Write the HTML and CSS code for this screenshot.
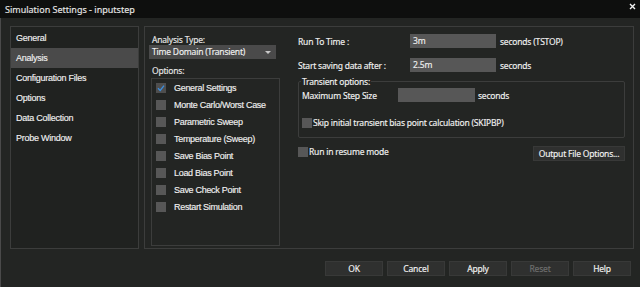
FILE: index.html
```html
<!DOCTYPE html>
<html lang="en">
<head>
  <meta charset="UTF-8" />
  <title>Simulation Settings - inputstep</title>
  <link rel="stylesheet" href="styles.css">
</head>
<body>

  <div class="titlebar">
    <span class="title">Simulation Settings - inputstep</span>
    <svg class="close" width="7" height="7" viewBox="0 0 7 7">
      <path d="M1 1 L6 6 M6 1 L1 6" stroke="#f2f2f2" stroke-width="1.4"/>
    </svg>
  </div>

  <div class="main">
    <ul class="nav">
      <li>General</li>
      <li class="active">Analysis</li>
      <li>Configuration Files</li>
      <li>Options</li>
      <li>Data Collection</li>
      <li>Probe Window</li>
    </ul>

    <div class="panel">
      <div class="leftcol">
        <div class="lbl">Analysis Type:</div>
        <div class="dropdown">
          <span>Time Domain (Transient)</span>
          <span class="arrow"></span>
        </div>
        <div class="lbl opts">Options:</div>
        <div class="optbox">
          <div class="opt"><span class="box checked"><svg width="10" height="10" viewBox="0 0 10 10"><path d="M2 5.2 L4.2 7.4 L8 2.6" fill="none" stroke="#3b8fe0" stroke-width="1.3"/></svg></span>General Settings</div>
          <div class="opt"><span class="box"></span>Monte Carlo/Worst Case</div>
          <div class="opt"><span class="box"></span>Parametric Sweep</div>
          <div class="opt"><span class="box"></span>Temperature (Sweep)</div>
          <div class="opt"><span class="box"></span>Save Bias Point</div>
          <div class="opt"><span class="box"></span>Load Bias Point</div>
          <div class="opt"><span class="box"></span>Save Check Point</div>
          <div class="opt"><span class="box"></span>Restart Simulation</div>
        </div>
      </div>

      <div class="rightcol">
        <div class="field">
          <span class="flabel">Run To Time :</span>
          <span class="input">3m</span>
          <span class="unit">seconds (TSTOP)</span>
        </div>
        <div class="field">
          <span class="flabel">Start saving data after :</span>
          <span class="input">2.5m</span>
          <span class="unit">seconds</span>
        </div>

        <div class="group">
          <span class="legend">Transient options:</span>
          <div class="field small">
            <span class="flabel">Maximum Step Size</span>
            <span class="input"></span>
            <span class="unit">seconds</span>
          </div>
          <div class="check"><span class="box"></span>Skip initial transient bias point calculation (SKIPBP)</div>
        </div>

        <div class="resume">
          <div class="check"><span class="box"></span>Run in resume mode</div>
          <button class="btn outfile">Output File Options...</button>
        </div>
      </div>
    </div>
  </div>

  <div class="buttons">
    <button class="btn">OK</button>
    <button class="btn">Cancel</button>
    <button class="btn">Apply</button>
    <button class="btn disabled">Reset</button>
    <button class="btn">Help</button>
  </div>

</body>
</html>
```

FILE: styles.css
```css
body {
  margin: 0;
  width: 640px;
  height: 287px;
  overflow: hidden;
  background: #232523;
  color: #f0f0f0;
  font-family: "Noto Sans", sans-serif;
  font-size: 8.5px;
  letter-spacing: -0.2px;
  -webkit-text-stroke: 0.15px;
  box-shadow: inset 1px 0 0 #4a4a4a;
}

.titlebar {
  height: 18px;
  background: #0e0f0e;
  display: flex;
  align-items: center;
  justify-content: space-between;
  padding: 0 4px 0 5px;
}

.title {
  color: #e6e6e6;
  font-size: 9px;
  letter-spacing: 0;
}

.close {
  margin-top: -6px;
}

.main {
  display: flex;
  gap: 5px;
  padding: 8px 6px 0 10px;
  height: 223px;
}

.nav {
  list-style: none;
  margin: 0;
  padding: 1px 0 0;
  width: 127px;
  border: 1px solid #3c3d3c;
  background: #202220;
  font-family: "Liberation Sans", sans-serif;
  font-size: 9px;
  letter-spacing: -0.25px;
}

.nav li {
  height: 20px;
  line-height: 20px;
  padding-left: 5px;
  color: #f0f0f0;
}

.nav li.active {
  background: #4a4a4a;
}

.panel {
  flex: 1;
  display: flex;
  gap: 18px;
  border: 1px solid #3c3d3c;
  padding: 7px 8px 0 4px;
}

.leftcol {
  width: 131px;
  display: flex;
  flex-direction: column;
}

.lbl {
  padding-left: 3px;
  height: 11px;
  line-height: 11px;
  color: #e6e6e6;
}

.opts {
  margin-top: 6px;
}

.dropdown {
  width: 127px;
  height: 14px;
  background: #4a4a4a;
  display: flex;
  align-items: center;
  justify-content: space-between;
  padding: 0 5px 0 3px;
  box-sizing: border-box;
  line-height: 14px;
}

.arrow {
  border-left: 3px solid transparent;
  border-right: 3px solid transparent;
  border-top: 3px solid #c8c8c8;
}

.optbox {
  margin: 2px 0 0 2px;
  height: 168px;
  border: 1px solid #3c3d3c;
  box-sizing: border-box;
}

.opt {
  display: flex;
  align-items: center;
  height: 17px;
  padding-left: 4px;
  font-family: "Liberation Sans", sans-serif;
  font-size: 9px;
  letter-spacing: -0.3px;
  color: #f0f0f0;
}

.box {
  width: 10px;
  height: 10px;
  background: #575757;
  display: inline-block;
  flex: none;
}

.opt .box {
  margin-right: 8px;
}

.box.checked {
  background: #4e4e4e;
}

.box svg {
  display: block;
}

.rightcol {
  flex: 1;
  display: flex;
  flex-direction: column;
}

.field {
  display: flex;
  align-items: center;
  height: 14px;
}

.field + .field {
  margin-top: 10px;
}

.flabel {
  width: 112px;
}

.input {
  width: 86px;
  height: 14px;
  line-height: 14px;
  background: #575757;
  padding-left: 3px;
  box-sizing: border-box;
  margin-right: 4px;
}

.group {
  position: relative;
  margin-top: 9px;
  height: 57px;
  border: 1px solid #3c3d3c;
  border-radius: 2px;
  padding: 6px 3px 0;
  box-sizing: border-box;
}

.legend {
  position: absolute;
  top: -6px;
  left: 2px;
  padding: 0 1px;
  background: #232523;
  line-height: 11px;
}

.group .flabel {
  width: 96px;
}

.group .input {
  width: 77px;
  margin-right: 3px;
}

.check {
  display: flex;
  align-items: center;
  gap: 1px;
}

.group .check {
  margin-top: 15px;
}

.resume {
  display: flex;
  justify-content: space-between;
  align-items: flex-start;
  margin-top: 8px;
}

.btn {
  font-family: "Noto Sans", sans-serif;
  font-size: 8.5px;
  letter-spacing: -0.2px;
  -webkit-text-stroke: 0.15px;
  color: #f2f2f2;
  background: #2f302f;
  border: 1px solid #383938;
  height: 15px;
  padding: 0;
  cursor: pointer;
}

.outfile {
  width: 92px;
}

.buttons {
  display: flex;
  justify-content: flex-end;
  gap: 4px;
  padding: 12px 9px 0 0;
}

.buttons .btn {
  width: 58px;
}

.btn.disabled {
  color: #707070;
}
```
